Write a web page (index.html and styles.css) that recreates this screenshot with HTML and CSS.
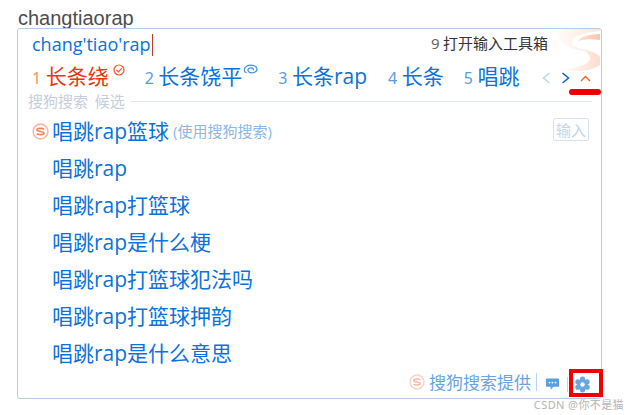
FILE: index.html
```html
<!DOCTYPE html>
<html lang="zh">
<head>
<meta charset="utf-8">
<title>搜狗输入法</title>
<link rel="stylesheet" href="styles.css">
</head>
<body>
<div class="page">
  <div class="typed">changtiaorap</div>
  <div class="panel">
    <svg class="logo-bg" width="49" height="46" viewBox="0 0 49 46">
      <defs>
        <linearGradient id="fan" x1="0" y1="0" x2="1" y2="0"><stop offset="0" stop-color="#fff"/><stop offset="1" stop-color="#fde4d8"/></linearGradient>
        <linearGradient id="band" x1="0" y1="0" x2="1" y2="0"><stop offset="0" stop-color="#fde0d2"/><stop offset="1" stop-color="#fbc4aa"/></linearGradient>
        <linearGradient id="low" x1="0" y1="0" x2="1" y2="0"><stop offset="0" stop-color="#fff"/><stop offset="1" stop-color="#fddccd"/></linearGradient>
      </defs>
      <path d="M0 0 H49 V2 C30 3 20 8 20 14 C20 18 30 20 38 22 C20 22 8 16 0 0 Z" fill="url(#fan)"/>
      <path d="M48 5 C38 5 28 8 26 12 C32 10 40 10 48 11 Z" fill="url(#band)"/>
      <path d="M30 20 C40 22 46 25 48 28 V36 C40 42 25 44 8 40 C22 40 36 36 38 30 C38 26 34 22 30 20 Z" fill="url(#low)"/>
    </svg>
    <div class="top-row">
      <div class="pinyin">chang'tiao'rap<span class="caret"></span></div>
      <div class="tool"><span class="tool-num">9</span> 打开输入工具箱</div>
    </div>
    <div class="cand-row">
      <div class="cands">
        <span class="cand first"><span class="num">1</span><span class="word">长条绕</span><svg class="mark m1" width="12" height="12" viewBox="0 0 12 12"><circle cx="6" cy="6" r="5" fill="none" stroke="#f0552a" stroke-width="1.2"/><path d="M3.4 5.8 L5.4 7.8 L8.7 4.3" fill="none" stroke="#f0552a" stroke-width="1.2"/></svg></span>
        <span class="cand c2"><span class="num">2</span><span class="word">长条饶平</span><svg class="mark m2" width="15" height="11" viewBox="0 0 15 11"><path d="M3.5 9 C0.5 8 0.5 3.5 4 2 C8 0.2 13.5 1.5 14 5 C14.3 8.5 8.5 9.8 6 8 C4 6.5 5 3.8 8 3.8 C10 3.8 11 5.2 10 6.2" fill="none" stroke="#3b8fe0" stroke-width="1.2"/></svg></span>
        <span class="cand c3"><span class="num">3</span><span class="word">长条rap</span></span>
        <span class="cand c4"><span class="num">4</span><span class="word">长条</span></span>
        <span class="cand c5"><span class="num">5</span><span class="word">唱跳</span></span>
      </div>
      <div class="arrows">
        <svg width="9" height="12" viewBox="0 0 9 12"><path d="M7.5 1 L1.5 6 L7.5 11" fill="none" stroke="#bcd6f2" stroke-width="1.5"/></svg>
        <svg width="9" height="12" viewBox="0 0 9 12"><path d="M1.5 1 L7.5 6 L1.5 11" fill="none" stroke="#0a62c4" stroke-width="1.5"/></svg>
        <svg width="11" height="7" viewBox="0 0 11 7"><path d="M1 6 L5.5 1.5 L10 6" fill="none" stroke="#f2631f" stroke-width="1.4"/></svg>
      </div>
    </div>
    <div class="divider-row">
      <span class="divider-label">搜狗搜索&nbsp;&nbsp;候选</span>
      <span class="divider-line"></span>
    </div>
    <div class="results">
      <div class="result head">
        <svg class="s-icon" width="17" height="17" viewBox="0 0 17 17"><circle cx="8.5" cy="8.5" r="7.4" fill="none" stroke="#f9b7a2" stroke-width="1.6"/><path d="M12 6.3 C10.5 5 5 5 5 6.9 C5 8.9 12 8.1 12 10.1 C12 12 6.3 12 4.8 10.7" fill="none" stroke="#f2835f" stroke-width="1.7"/></svg>
        <span>唱跳rap篮球</span>
        <span class="hint">(使用搜狗搜索)</span>
        <span class="enter">输入</span>
      </div>
      <div class="result">唱跳rap</div>
      <div class="result">唱跳rap打篮球</div>
      <div class="result">唱跳rap是什么梗</div>
      <div class="result">唱跳rap打篮球犯法吗</div>
      <div class="result">唱跳rap打篮球押韵</div>
      <div class="result">唱跳rap是什么意思</div>
    </div>
    <div class="footer">
      <svg class="s-small" width="16" height="16" viewBox="0 0 17 17"><circle cx="8.5" cy="8.5" r="7.4" fill="none" stroke="#fbd3c6" stroke-width="1.6"/><path d="M12 6.3 C10.5 5 5 5 5 6.9 C5 8.9 12 8.1 12 10.1 C12 12 6.3 12 4.8 10.7" fill="none" stroke="#f8bba6" stroke-width="1.7"/></svg>
      <span class="provider">搜狗搜索提供</span>
      <span class="sep"></span>
      <svg class="chat" width="15" height="14" viewBox="0 0 16 14"><path d="M2 1 H14 Q15 1 15 2 V9 Q15 10 14 10 H9 L6 13 V10 H2 Q1 10 1 9 V2 Q1 1 2 1 Z" fill="#5a9fe0"/><circle cx="4.8" cy="5.5" r="1" fill="#fff"/><circle cx="8" cy="5.5" r="1" fill="#fff"/><circle cx="11.2" cy="5.5" r="1" fill="#fff"/></svg>
      <span class="sep short"></span>
      <svg class="gear" width="17" height="17" viewBox="0 0 17 17"><g fill="#6ca6e2"><circle cx="8.5" cy="3.2" r="2.6"/><circle cx="8.5" cy="13.8" r="2.6"/><circle cx="3.9" cy="5.85" r="2.6"/><circle cx="13.1" cy="5.85" r="2.6"/><circle cx="3.9" cy="11.15" r="2.6"/><circle cx="13.1" cy="11.15" r="2.6"/><circle cx="8.5" cy="8.5" r="5"/></g><circle cx="8.5" cy="8.5" r="2.2" fill="#fff"/></svg>
    </div>
    <span class="mark-bar"></span>
    <span class="mark-box"></span>
  </div>
  <div class="watermark">CSDN @你不是猫</div>
</div>
</body>
</html>
```

FILE: styles.css
```css
* { box-sizing: border-box; }
html, body { margin: 0; padding: 0; background: #fff; }
body { font-family: "Noto Sans", "Noto Sans CJK SC", sans-serif; }
.page { position: relative; width: 630px; height: 415px; overflow: hidden; padding-left: 17px; }
.typed { height: 28px; padding: 8px 0 0 1px; font: 20px/20px "Liberation Sans", sans-serif; color: #4d4d4d; }
.panel { position: relative; width: 585px; height: 371px; border: 1px solid #b3cde8; border-radius: 3px; padding: 0 12px 0 10px; }
.logo-bg { position: absolute; right: 0; top: 0; }
.top-row { position: relative; display: flex; justify-content: space-between; height: 29px; padding: 2px 0 0 4px; }
.pinyin { font: 18px/27px "Open Sans", "Noto Sans", sans-serif; color: #0a72dc; display: flex; align-items: center; height: 27px; }
.caret { width: 1px; height: 22px; background: #c0392b; margin-left: 1px; }
.tool { font: 15px/23px "Noto Sans CJK SC", sans-serif; color: #333; padding-right: 41px; }
.tool-num { font-family: "Noto Sans", sans-serif; color: #666; }
.cand-row { position: relative; display: flex; justify-content: space-between; height: 35px; padding-left: 4px; }
.cands { display: flex; align-items: baseline; line-height: 30px; padding-top: 3px; }
.cand { display: flex; align-items: baseline; color: #0a72dc; font-size: 21px; font-family: "Open Sans", "Noto Sans CJK SC", sans-serif; white-space: nowrap; }
.word { font-family: "Open Sans", "Noto Sans CJK SC", sans-serif; }
.num { font-size: 16px; color: #5b9be6; margin-right: 4.5px; font-family: "Noto Sans", sans-serif; }
.first .num { color: #f9935f; }
.first .word { color: #e8370e; }
.mark { align-self: flex-start; margin-top: 3px; }
.m1 { margin-left: 4px; }
.m2 { margin-left: 1px; margin-right: 20px; margin-top: 3px; }
.c2 { margin-left: 20px; }
.c4 { margin-left: 21px; }
.c5 { margin-left: 20px; }
.arrows { display: flex; align-items: center; gap: 10px; height: 35px; margin-right: -2px; padding-top: 5px; }
.divider-row { display: flex; align-items: center; gap: 6px; height: 16px; }
.divider-label { font: 15px/16px "Noto Sans CJK SC", sans-serif; color: #c5cedd; white-space: nowrap; }
.divider-line { flex: 1; height: 1px; background: #e0e6f1; margin-right: -3px; }
.results { display: flex; flex-direction: column; padding: 9px 0 0 24px; }
.result { height: 37px; font: 21px/26px "Open Sans", "Noto Sans CJK SC", sans-serif; color: #0a72dc; white-space: nowrap; }
.result.head { position: relative; display: flex; align-items: center; padding-bottom: 11px; }
.s-icon { position: absolute; left: -20px; top: 5px; }
.hint { font-size: 15px; color: #8ab8e8; margin-left: 4px; }
.enter { position: absolute; right: 0; top: 0; width: 36px; height: 23px; border: 1px solid #d6e2f0; border-radius: 2px; font: 15px/21px "Noto Sans CJK SC", sans-serif; color: #c3d6ec; text-align: center; }
.footer { position: absolute; right: 10px; bottom: 1px; height: 30px; display: flex; align-items: center; }
.s-small { margin-right: 4px; }
.provider { font: 17px/24px "Noto Sans CJK SC", sans-serif; color: #68a4e6; }
.sep { width: 1px; height: 18px; background: #b9d4ee; margin: 0 8px 0 5px; }
.sep.short { height: 15px; margin: 4px 6px 0 7px; }
.chat { margin-top: 4px; }
.gear { margin-top: 4px; }
.mark-bar { position: absolute; left: 551px; top: 60px; width: 32px; height: 6px; background: #f00000; border-radius: 3px; }
.mark-box { position: absolute; left: 551px; top: 340px; width: 34px; height: 28px; border: 4px solid #f00000; }
.watermark { position: absolute; right: 0; bottom: 3px; font: 11px/14px "Noto Sans", "Noto Sans CJK SC", sans-serif; color: #b5b5b5; letter-spacing: .4px; padding-right: 6px; }
```
